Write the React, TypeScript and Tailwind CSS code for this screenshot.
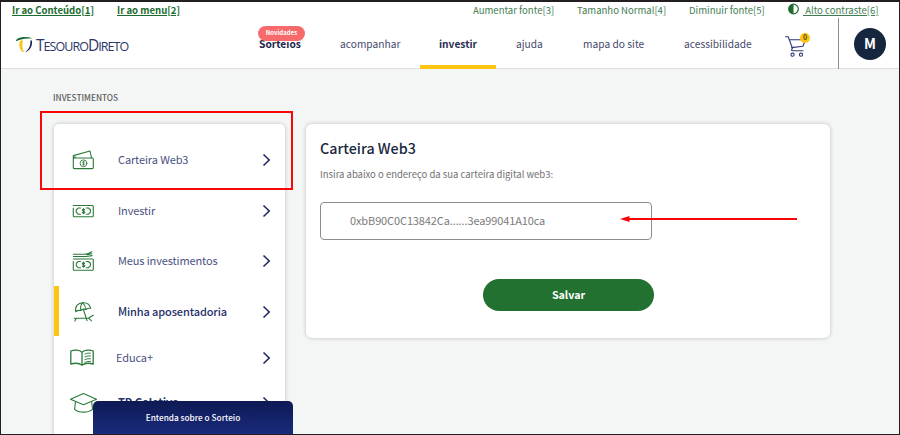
import type { ReactNode } from "react";

const stroke = {
  fill: "none",
  stroke: "currentColor",
  strokeWidth: 1.1,
  strokeLinecap: "round" as const,
  strokeLinejoin: "round" as const,
};

function WalletIcon() {
  return (
    <svg width="24" height="22" viewBox="0 0 24 22" {...stroke}>
      <rect x="2.300" y="9" width="20" height="10.600" rx="1" />
      <path d="M2.300 9V6.600L19 2 20.600 9M2.500 8.600 4.500 8" />
      <circle cx="12.500" cy="14.300" r="3.400" strokeWidth=".9" />
      <path d="M13.600 13.200c-.6-.7-2.200-.5-2.100.3.100.9 2.100.6 2.200 1.600 0 .8-1.600 1-2.300.2M12.500 12.200v4.200" strokeWidth=".7" />
    </svg>
  );
}

function Note() {
  return (
    <>
      <path d="M2.300 5.500h19a1 1 0 0 1 1 1v9.200a1 1 0 0 1-1 1h-18a1 1 0 0 1-1-1V8" />
      <path d="M9.500 8H7.200C6.700 9 6.200 9.300 5.300 9.600v3c.9.300 1.400.7 1.900 1.700h2.300M15.300 8h2.300c.4 1 1 1.300 1.800 1.600v3c-.8.300-1.400.7-1.800 1.700h-2.300" />
      <path d="M13.600 10c-.6-1-2.300-.7-2.200.3.100 1.200 2.300.8 2.400 2 0 1-1.800 1.200-2.500.2M12.500 8.600v5.200" />
    </>
  );
}

function InvestIcon() {
  return (
    <svg width="24" height="22" viewBox="0 0 24 22" {...stroke}>
      <Note />
    </svg>
  );
}

function PortfolioIcon() {
  return (
    <svg width="24" height="22" viewBox="0 0 24 22" {...stroke}>
      <g transform="translate(0 3.500)">
        <Note />
      </g>
      <path d="M2.300 6.500h13l5.800-.9M2.300 4.200h11.500c3 0 5-1 7-2.400M16 4.600l5-.8" />
    </svg>
  );
}

function RetirementIcon() {
  return (
    <svg width="24" height="22" viewBox="0 0 24 22" {...stroke}>
      <path d="M4.700 10.700C3.500 5 7.500 2 11.500 1.700c4-.2 7.500 1.800 8.200 5.600Q17 6.800 15 8.500 12.500 7.500 9.800 9.500 7 9 4.700 10.700z" />
      <path d="M15 8.500C14.500 5.500 13 3 11.500 1.700 9.700 3.800 9.300 6.500 9.800 9.500M12.400 8.500 16 19.700" />
      <path d="M3.300 17.300h14l5-3M5.300 17.300 3.900 20M18 17.300l2.500 2.700" />
    </svg>
  );
}

function BookIcon() {
  return (
    <svg width="26" height="20" viewBox="0 0 26 20" {...stroke} strokeWidth={1.3}>
      <path d="M13 4.200C10.500 2 5.500 1.500 1.800 3v13c3.700-1 8.700-.8 11.200 1.200 2.500-2 7.500-2.200 11.200-1.200V3C20.500 1.500 15.500 2 13 4.200zv13" />
      <path d="M16 6c2-.9 3.500-1 5.500-.8M16 8.800c2-.9 3.500-1 5.500-.8M16 11.600c2-.9 3.500-1 5.500-.8M16 14.300c2-.9 3.500-1 5.500-.8" strokeWidth="1" />
    </svg>
  );
}

function CapIcon() {
  return (
    <svg width="28" height="22" viewBox="0 0 28 22" {...stroke}>
      <path d="M1.500 7.200 14.500 1.500 27.500 7.200 14.500 12.800z" />
      <path d="M6.500 9.500 5.600 17.400c4 3.600 13.800 3.600 18 0L22.600 9.500" />
    </svg>
  );
}

function Chevron() {
  return (
    <svg width="9" height="14" viewBox="0 0 9 14" fill="none" stroke="#1f2a63" strokeWidth="1.600">
      <path d="M1.500 1.500 7.200 7 1.500 12.500" />
    </svg>
  );
}

type RowProps = { icon: ReactNode; label: string; row: string; lead: string; text: string };

function MenuRow({ icon, label, row, lead, text }: RowProps) {
  return (
    <li className={`flex items-center pr-[14px] ${row}`}>
      <span className={`flex shrink-0 items-center text-[#2b7a3a] ${lead}`}>{icon}</span>
      <span className={`-mt-[2px] flex-1 whitespace-nowrap leading-4 ${text}`}>{label}</span>
      <Chevron />
    </li>
  );
}

function Logo() {
  return (
    <div className="flex w-[115px] items-center">
      <svg className="shrink-0" width="19" height="18" viewBox="0 0 19 18">
        <path d="M.8 5.200C2 .8 11 .2 17.500 2.200 12.500 2.300 6.500 2.500.8 5.200z" fill="#1c6b33" />
        <path d="M4.800 5c1.100-.5 2-.7 3.300-.8C7 8.500 6.800 12.500 9.200 16.200 4.500 15.500 3.800 9.500 4.800 5z" fill="#f3c613" />
        <path d="M16.800 4.300c1.200 5-1.800 10.800-6.600 11.900 3.300-2.700 5.500-6 5.100-11.400z" fill="#1d2856" />
      </svg>
      <span className="mt-[2px] ml-[2px] whitespace-nowrap font-['Open_Sans',sans-serif] text-[12.500px] leading-[18px] tracking-[-0.95px] text-[#2b3668]">
        <span className="text-[15.500px]">T</span>ESOURO<span className="text-[15.500px]">D</span>IRETO
      </span>
    </div>
  );
}

function Cart() {
  return (
    <div className="relative mt-[2px] h-[26px] w-[26px]">
      <svg width="26" height="26" viewBox="0 0 26 26" fill="none" stroke="#2f3a78" strokeWidth="1.100" strokeLinecap="round" strokeLinejoin="round">
        <path d="M1.500 4.800h2.700L8.500 16.500M5.500 7.800h16l-2.600 6.500L7.600 15.600M8.500 16.500c-1.500 1.200-1 2.300.2 2.300h10.300" />
        <circle cx="8.600" cy="22.700" r="1.600" />
        <circle cx="17" cy="22.700" r="1.600" />
      </svg>
      <span className="absolute top-[1px] left-[16px] flex h-[10px] w-[10px] items-center justify-center rounded-full bg-[#fdc50f] text-[7px] leading-none font-bold text-[#5a4a20]">0</span>
    </div>
  );
}

export default function App() {
  return (
    <div className="relative flex h-[435px] w-[900px] flex-col overflow-hidden border border-t-2 border-[#231f20] bg-[#f4f6f5] font-['Noto_Sans_CJK_SC','Noto_Sans',sans-serif]">
      <header className="h-[67px] shrink-0 border-b border-[#dcdedd] bg-white">
        <div className="flex h-[16px] items-center text-[9.550px] leading-4 whitespace-nowrap text-[#3f7d50]">
          <a className="ml-[11px] w-[105px] font-bold text-[#1c6b2f] underline">Ir ao Conteúdo[1]</a>
          <a className="w-[356px] font-bold text-[#1c6b2f] underline">Ir ao menu[2]</a>
          <span className="w-[104px]">Aumentar fonte[3]</span>
          <span className="w-[112px]">Tamanho Normal[4]</span>
          <span className="w-[98px]">Diminuir fonte[5]</span>
          <svg className="mb-[3px]" width="12" height="12" viewBox="0 0 12 12">
            <circle cx="6.500" cy="6" r="4.800" fill="none" stroke="#1c6b2f" strokeWidth="1.200" />
            <path d="M6.500 1.200a4.800 4.800 0 0 0 0 9.600z" fill="#1c6b2f" />
          </svg>
          <a className="ml-[4px] whitespace-pre underline"> Alto contraste[6]</a>
        </div>
        <div className="flex h-[51px] items-center">
          <div className="mt-[2px] ml-[14px]"><Logo /></div>
          <nav className="ml-[129px] flex h-full items-center text-[10.200px] leading-4 tracking-[0.02px] whitespace-nowrap text-[#45496b]">
            <a className="relative w-[81px] font-bold text-[#1c2447]">
              Sorteios
              <span className="absolute -top-[10px] -left-px flex h-[15px] w-[47px] items-center justify-center rounded-full bg-[#f76a6c] text-[6px] leading-none text-white">Novidades</span>
            </a>
            <a className="w-[80px]">acompanhar</a>
            <a className="flex h-full w-[76px] items-center justify-center border-y-4 border-transparent border-b-[#fdc50f] font-bold text-[#2a2f55]">investir</a>
            <a className="ml-[20px] w-[67px]">ajuda</a>
            <a className="w-[101px]">mapa do site</a>
            <a className="w-[100px]">acessibilidade</a>
          </nav>
          <Cart />
          <div className="ml-[28px] h-full w-px bg-[#8e8e8e]" />
          <div className="ml-[15px] flex h-8 w-8 items-center justify-center rounded-full bg-[#17263f] text-[14px] font-bold text-white">M</div>
        </div>
      </header>

      <main className="pt-[20px] pl-[53px]">
        <h1 className="-ml-px h-[35px] text-[8.300px] leading-4 font-medium text-[#5c5c5c]">INVESTIMENTOS</h1>
        <div className="flex items-start gap-[21px]">
          <ul className="h-[330px] w-[231px] rounded-t-[5px] bg-white pt-[10px] text-[11px] tracking-[-0.12px] text-[#4a5283] shadow-[0_0_4px_rgba(0,0,0,0.22)]">
            <MenuRow icon={<WalletIcon />} label="Carteira Web3" row="h-[51px]" lead="w-[64px] pl-[17px]" text="" />
            <MenuRow icon={<InvestIcon />} label="Investir" row="h-[50px] pt-px" lead="w-[64px] pl-[17px]" text="" />
            <MenuRow icon={<PortfolioIcon />} label="Meus investimentos" row="h-[51px] pt-px" lead="w-[64px] pl-[17px]" text="" />
            <MenuRow icon={<RetirementIcon />} label="Minha aposentadoria" row="h-[50px] border-l-[5px] border-[#fdc50f] pt-[2px]" lead="w-[59px] pl-[12px]" text="font-medium text-[#28316b]" />
            <MenuRow icon={<BookIcon />} label="Educa+" row="h-[42px] pt-px" lead="w-[62px] pl-[15px]" text="" />
            <MenuRow icon={<CapIcon />} label="TD Coletivo" row="h-[49px] pt-px" lead="w-[64px] pl-[15px]" text="font-bold text-[#28316b]" />
          </ul>

          <section className="h-[214px] w-[524px] rounded-[6px] bg-white px-[14px] pt-[14px] shadow-[0_0_4px_rgba(0,0,0,0.22)]">
            <h2 className="text-[14.300px] leading-5 font-medium text-[#1a2742]">Carteira Web3</h2>
            <p className="mt-[8px] text-[9.500px] leading-4 text-[#717171]">Insira abaixo o endereço da sua carteira digital web3:</p>
            <div className="mt-[20px] flex h-[38px] w-[332px] items-center rounded-[4px] border border-[#8d8d8d] pb-[2px] pl-[29px] text-[11px] tracking-[-0.12px] text-[#7b7b7b]">
              0xbB90C0C13842Ca......3ea99041A10ca
            </div>
            <button className="mt-[39px] ml-[163px] flex h-8 w-[171px] items-center justify-center rounded-full bg-[#227130] text-[10.700px] font-bold text-white">Salvar</button>
          </section>
        </div>
      </main>

      <div className="absolute top-[399px] left-[92px] flex h-[36px] w-[200px] items-center justify-center rounded-t-[5px] bg-linear-to-b from-[#0e1a54] to-[#1a2c80] pb-[3px] text-[8.250px] font-medium text-white">Entenda sobre o Sorteio</div>
      <div className="absolute top-[109px] left-[39px] h-[79px] w-[253px] border-2 border-[#f80808]" />
      <svg className="absolute top-[212px] left-[618px]" width="180" height="10" viewBox="0 0 180 10">
        <path d="M8 5h170" stroke="#fa0505" strokeWidth="1.800" />
        <path d="M1 5 10.500 2v6z" fill="#fa0505" />
      </svg>
    </div>
  );
}
